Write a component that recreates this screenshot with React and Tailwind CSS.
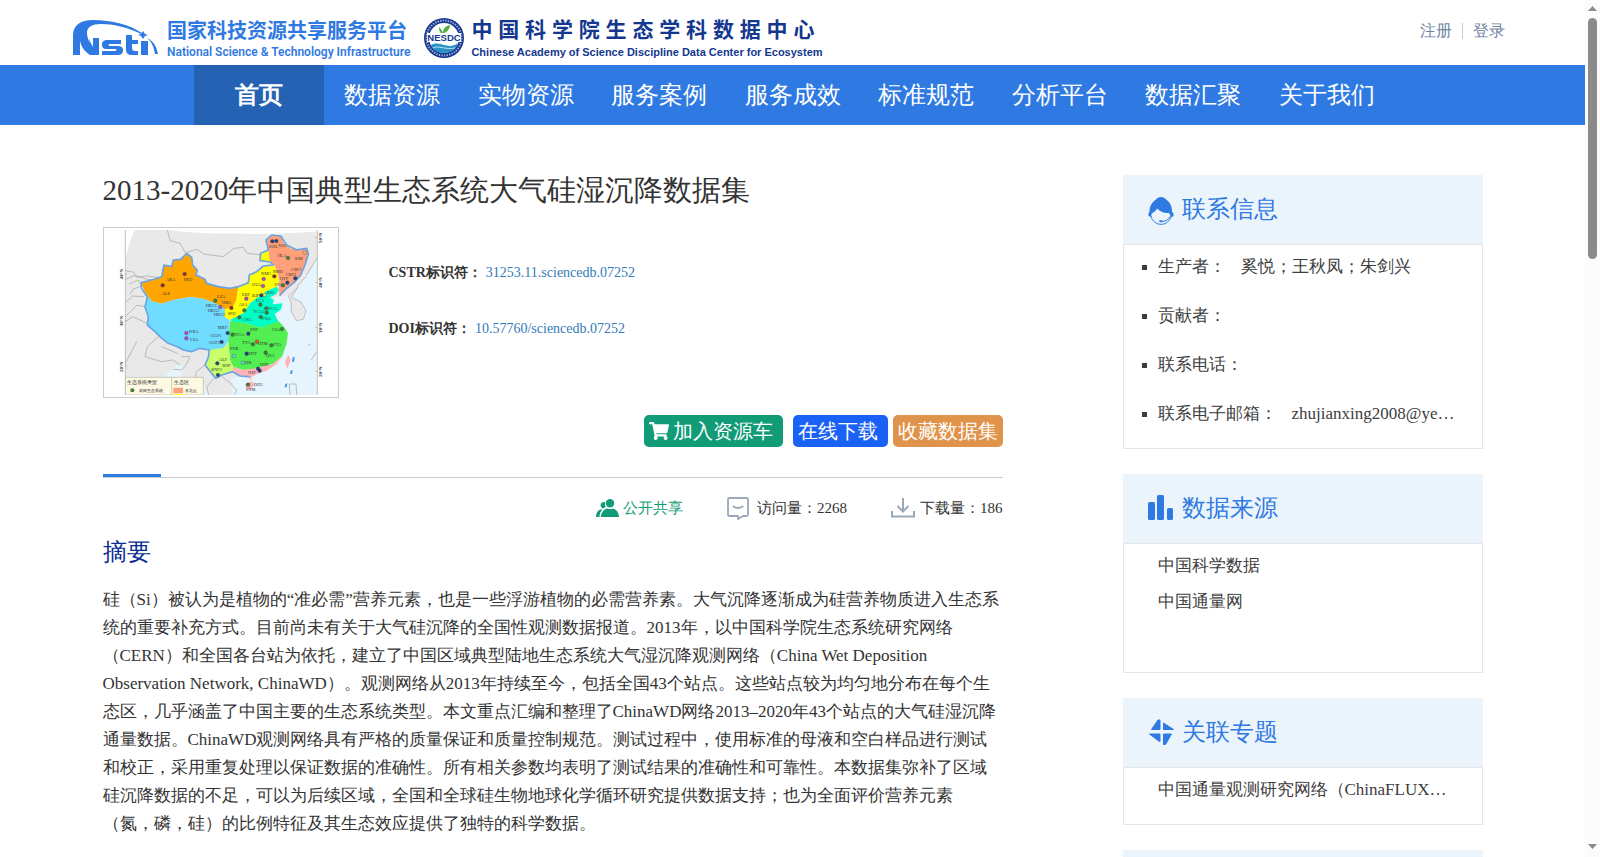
import React from "react";
import { FaShoppingCart } from "react-icons/fa";

const NAV = ["数据资源", "实物资源", "服务案例", "服务成效", "标准规范", "分析平台", "数据汇聚", "关于我们"];

const CONTACTS = [
  ["生产者：", "奚悦；王秋凤；朱剑兴"],
  ["贡献者：", ""],
  ["联系电话：", ""],
  ["联系电子邮箱：", "zhujianxing2008@ye…"],
];

const ABSTRACT =
  "硅（Si）被认为是植物的“准必需”营养元素，也是一些浮游植物的必需营养素。大气沉降逐渐成为硅营养物质进入生态系统的重要补充方式。目前尚未有关于大气硅沉降的全国性观测数据报道。2013年，以中国科学院生态系统研究网络（CERN）和全国各台站为依托，建立了中国区域典型陆地生态系统大气湿沉降观测网络（China Wet Deposition Observation Network, ChinaWD）。观测网络从2013年持续至今，包括全国43个站点。这些站点较为均匀地分布在每个生态区，几乎涵盖了中国主要的生态系统类型。本文重点汇编和整理了ChinaWD网络2013–2020年43个站点的大气硅湿沉降通量数据。ChinaWD观测网络具有严格的质量保证和质量控制规范。测试过程中，使用标准的母液和空白样品进行测试和校正，采用重复处理以保证数据的准确性。所有相关参数均表明了测试结果的准确性和可靠性。本数据集弥补了区域硅沉降数据的不足，可以为后续区域，全国和全球硅生物地球化学循环研究提供数据支持；也为全面评价营养元素（氮，磷，硅）的比例特征及其生态效应提供了独特的科学数据。";

function NstiLogo() {
  return (
    <svg className="mt-0.5 h-9 w-[86px] shrink-0" viewBox="0 0 86 36" fill="#2f7ae2" role="img" aria-label="Nsti">
      <path d="M0 35V14C1 4 9 0 20 0C39 0 57 5 69 13L68 14C54 7 40 4 28 4C19 4 14 7 14 13C14 21 20 28 26 35H17C11 31 8 26 7 21V35Z" />
      <path d="M16 19C17 22 19 25 20 27V18H26V35H21C18 30 16 25 16 19Z" />
      <path d="M35 20H48V24H37C35 24 35 26 37 26H44C48 26 50 27 50 30C50 34 48 35 44 35H29V31H42C44 31 44 29 42 29H34C30 29 29 27 29 25C29 21 31 20 35 20Z" />
      <path d="M53 15H59V20H65V24H59V28C59 30 60 31 62 31H65V35H59C55 35 53 33 53 30Z" />
      <path d="M68 21H75V35H68Z" />
      <path d="M70 11L72 14L75 15L72 16L70 19L68 16L65 15L68 14Z" />
      <path d="M74 18C81 21 84 28 85 34H82C81 28 79 22 74 18Z" />
    </svg>
  );
}

function NesdcSeal() {
  return (
    <svg className="size-10 shrink-0" viewBox="0 0 40 40" role="img" aria-label="NESDC">
      <circle cx="20" cy="20" r="20" fill="#14388f" />
      <circle cx="20" cy="20" r="17.5" fill="none" stroke="#fff" strokeWidth="2" strokeDasharray="1.4 1.2" opacity=".6" />
      <circle cx="20" cy="20" r="15" fill="#fff" />
      <path d="M7 27C12 24 16 26 20 27S29 29 34 25C32 31 27 35 20 35S9 32 7 27Z" fill="#2793c4" />
      <path d="M9 30C15 27 21 32 31 30" fill="none" stroke="#bfe4f2" />
      <path d="M19 15C18 12 16 10 15 9C15 13 16 15 19 16C22 14 26 12 26 7C21 8 19 11 19 15Z" fill="#4fae3c" />
      <path d="M3 15H37V24H3Z" fill="#fff" />
      <text x="20" y="23" fontSize="9.5" fontWeight="700" fontFamily="Liberation Sans, sans-serif" fill="#14388f" textAnchor="middle">NESDC</text>
    </svg>
  );
}

const MAROON = "#8a2d3c";
const GREEN = "#3f7f3a";
const NAVY = "#24417e";
const PURPLE = "#b648d8";
const CYAN = "#68d9dc";

const STATIONS = [
  [284, 342, MAROON], [218, 376, MAROON], [376, 422, GREEN], [391, 441, PURPLE], [424, 444, MAROON],
  [289, 519, PURPLE], [289, 535, PURPLE], [547, 244, NAVY], [559, 243, NAVY], [594, 294, GREEN],
  [644, 278, "#f2b66b"], [553, 349, MAROON], [521, 357, PURPLE], [519, 378, PURPLE], [616, 355, NAVY],
  [592, 368, NAVY], [579, 376, GREEN], [469, 416, PURPLE], [514, 406, NAVY], [524, 405, "#d6e85c"],
  [463, 451, GREEN], [511, 434, GREEN], [529, 445, GREEN], [530, 458, GREEN], [512, 471, GREEN],
  [448, 472, GREEN], [413, 519, NAVY], [428, 524, GREEN], [475, 521, NAVY], [576, 507, GREEN],
  [501, 545, "#e2572e"], [489, 553, GREEN], [544, 556, GREEN], [395, 546, NAVY], [470, 581, NAVY],
  [527, 578, GREEN], [432, 588, CYAN], [459, 608, CYAN], [504, 626, NAVY], [509, 632, NAVY],
  [382, 610, NAVY], [384, 645, NAVY], [474, 674, GREEN],
];

const LABELS = [
  [228, 362, "AKA"], [281, 362, "FKD"], [215, 405, "ALE"], [381, 413, "LZA"], [347, 441, "HBG1"], [353, 455, "HBG2"],
  [371, 468, "HBG3"], [396, 433, "HBG"], [297, 519, "DXA"], [300, 544, "LSA"], [537, 265, "DHL"], [565, 260, "NJO"],
  [563, 290, "HLA"], [614, 301, "SJM"], [603, 332, "CBF1"], [587, 348, "CBF2"], [548, 339, "NMD"], [513, 346, "NMG"],
  [486, 379, "ULG"], [569, 361, "QYF"], [553, 379, "SYA"], [456, 407, "ERF"], [486, 410, "BJF"], [530, 403, "BJU"],
  [446, 437, "ASA"], [497, 427, "LCA"], [490, 459, "YCA2"], [534, 450, "YCA"], [517, 479, "FQA"], [457, 484, "CWA"],
  [413, 465, "SPD"], [383, 506, "MXF"], [362, 530, "GGF1"], [357, 551, "GGF2"], [434, 528, "YGA"], [480, 513, "SNF"],
  [545, 512, "CSA"], [457, 553, "TYA"], [504, 554, "HTM"], [550, 559, "PTA"], [421, 570, "PDK"], [476, 586, "HTF"],
  [527, 592, "QYA"], [461, 612, "HJK"], [387, 602, "ALF"], [397, 622, "BNF"], [364, 634, "BNF2"], [510, 617, "DHF"],
  [474, 642, "HSF"], [491, 679, "DZU"], [468, 692, "SYM"],
];

const LATITUDES = [
  [99, 358, "40°N"], [99, 499, "30°N"], [99, 636, "20°N"],
  [697, 249, "50°N"], [697, 383, "40°N"], [697, 519, "30°N"], [697, 651, "20°N"],
];

function EcoMap() {
  return (
    <svg className="block h-auto w-full" viewBox="42 204 702 507" role="img" aria-label="生态区站点分布图" fontFamily="Liberation Serif, serif">
      <defs>
        <clipPath id="map-frame"><path d="M106 210H682V705H106Z" /></clipPath>
      </defs>
      <g clipPath="url(#map-frame)" strokeLinejoin="round" strokeLinecap="round">
        <path d="M106 210H682V705H106Z" fill="#e9e9e9" />
        <path d="M106 210H134Q116 250 106 300ZM232 210H682V214Q540 226 430 220Q320 222 232 210Z" fill="#fff" />
        <path d="M682 290L650 345L625 378L608 398L604 412L632 425L648 452L640 478L618 484L600 455L602 428L596 408L572 408L540 420L560 500L590 540L575 595L540 625L480 652L440 650L430 660L452 705H682Z" fill="#e6f5fd" />
        <path d="M106 632H150L170 650H225L240 625L265 608L280 620L275 650L345 655L355 705H106ZM400 705L405 672L430 655L455 705Z" fill="#e6f5fd" />
        <path d="M106 560L140 572L175 560L215 560L262 575L300 580L350 580L345 610L365 650L400 655L430 668L425 705H360L340 670L300 650L285 622L272 610L242 632L222 650H106Z" fill="#e9e9e9" />
        <path d="M596 408L625 380L604 412L632 425L648 452L640 478L620 482L604 455L604 430Z" fill="#e9e9e9" stroke="#a9a9a9" strokeWidth="2" />
        <g fill="none" stroke="#b0b0b0" strokeWidth="2.5">
          <path d="M232 210L240 242L270 250L286 278L322 268L340 282L400 290L432 265L460 262L472 280L510 284" />
          <path d="M106 332L130 336L140 352L170 348L205 352M106 358L135 346L172 358L190 360M118 372L145 360L155 378L128 388L120 402M106 428L128 408L160 410M106 470L140 436L168 440M106 485L128 470L172 490" />
          <path d="M205 530L172 560L165 590L215 605L248 600L270 615M215 560L262 580M275 590L300 590L290 612L275 630L250 628M350 610L320 635L312 660L340 670M372 655L350 680L356 705M398 652L420 668L440 690L432 705M140 545L106 610" />
          <path d="M682 292L650 345M648 350L622 378M680 575L670 590L664 600M656 555L660 553M600 705L598 672L618 672L620 705" />
        </g>
        <path d="M153 368L185 360L215 350L222 315L245 320L250 300L272 298L290 280L305 292L308 315L322 330L318 345L345 358L350 370L385 380L420 385L445 380L439 420L430 440L405 449L380 432L340 416L300 411L250 420L215 431L185 424L166 398Z" fill="#ffa500" />
        <path d="M153 372L166 398L185 424L215 431L250 420L300 411L340 416L380 432L405 447L404 470L419 480L417 540L402 563L375 570L358 570L330 565L305 575L280 570L262 560L235 550L215 535L195 515L172 495L175 470L165 440L172 412Z" fill="#70dcff" />
        <path d="M445 380L475 368L478 345L500 335L520 318L550 315L560 330L568 365L560 380L530 393L500 415L482 428L460 460L420 480L404 470L405 448L430 440L439 420ZM510 282L535 272L542 306L510 303Z" fill="#ffff00" />
        <path d="M540 306L535 270L528 240L545 225L572 228L582 252L605 268L650 265L655 282L645 315L632 345L612 368L590 385L570 410L566 388L568 360L560 330L552 314Z" fill="#ffa07a" />
        <path d="M560 380L566 390L560 402L540 412L552 420L548 433L578 430L572 450L554 462L566 485L540 495L510 503L470 490L430 487L420 480L460 460L482 428L500 415L530 393Z" fill="#00ffc8" />
        <path d="M420 484L470 490L510 503L566 484L582 500L594 520L590 550L576 590L548 612L500 625L460 630L430 620L420 600L415 545Z" fill="#52ee52" />
        <path d="M358 570L402 563L415 545L420 600L430 620L428 635L395 645L378 655L365 640L345 615L355 592Z" fill="#c9ff6b" />
        <path d="M428 620L460 630L500 625L548 612L576 588L560 612L530 632L500 642L484 652L484 664L477 652L450 648L430 638ZM466 672L486 664L492 674L482 690L468 686ZM585 605L595 585L602 600L592 628Z" fill="#ffb3b8" />
        <path d="M570 405L590 385L612 368L632 345L645 315L655 282L650 265L620 270L590 255L572 228L545 225L528 240L535 270L512 280L510 302L540 306L550 315L520 318L500 335L478 345L475 368L445 380L420 385L385 380L350 370L345 358L318 345L322 330L308 315L305 292L290 280L272 298L250 300L245 320L222 315L215 350L185 360L153 368L155 385L172 412L165 440L175 470L172 495L195 515L215 535L235 550L262 560L280 570L305 575L330 565L358 570L355 592L345 615L365 640L378 655L395 645L428 635L450 648L477 650" fill="none" stroke="#6ba3e3" strokeWidth="5" />
        <path d="M608 592L614 591L612 605L606 606ZM602 632L608 630L606 642L600 642ZM586 672L592 670L590 682L584 682Z" fill="#4a90e2" />
        <path d="M106 652H340V705H106Z" fill="#fdf9e3" stroke="#b5b5a5" strokeWidth="2" />
        <path d="M245 652V705" stroke="#b5b5a5" strokeWidth="2" />
        <path d="M250 683H279V700H250Z" fill="#ffa07a" />
        <path d="M250 702H279V706H250Z" fill="#ffff00" />
        <circle cx="127" cy="691" r="6" fill={GREEN} />
      </g>
      <g fontSize="15" fill="#222">
        <text x="112" y="672">生态系统类型</text>
        <text x="252" y="672">生态区</text>
        <g fontSize="13">
          <text x="147" y="696">农田生态系统</text>
          <text x="286" y="696">东北区</text>
        </g>
      </g>
      <g fontSize="13" fill="#333">
        {LABELS.map(([x, y, name]) => (
          <text key={name} x={x} y={y}>{name}</text>
        ))}
      </g>
      {STATIONS.map(([x, y, color]) => (
        <circle key={`${x}-${y}`} cx={x} cy={y} r="5.5" fill={color} stroke="#333" strokeWidth="1" />
      ))}
      <g fontSize="15" fontWeight="700" fill="#333">
        {LATITUDES.map(([x, y, name]) => (
          <text key={`${x}-${y}`} transform={`translate(${x} ${y}) rotate(-90)`}>{name}</text>
        ))}
      </g>
      <path d="M106 210V705M682 210V705M106 342H112M106 482H112M106 617H112M676 232H682M676 367H682M676 502H682M676 634H682" stroke="#a5a5a5" strokeWidth="2" />
    </svg>
  );
}

function AgentIcon() {
  return (
    <svg className="mt-1 h-7 w-[26px]" viewBox="0 0 26 28" fill="#2f7ae2" aria-hidden="true">
      <path d="M13 0C15.500 0 17 1 18 2.500C22 5 24 9 24 15L25.500 16V19L23 20.500C22.500 19 22 17.500 21 16C16 16.500 12 14.500 9 11.500C8 14.500 5 15 3.500 17L3 20L0.500 19V16L1.500 15C1.500 9 4 5 8 2.500C9 1 10.500 0 13 0Z" />
      <path d="M3 19C4 24 8 27.300 13 27.300C18 27.300 22 24 23 19" fill="none" stroke="#2f7ae2" strokeWidth="1" />
      <path d="M22 20C20 23 17 24.500 13.500 24.500" fill="none" stroke="#2f7ae2" strokeWidth="1" />
      <ellipse cx="13" cy="24.300" rx="2" ry="1" />
    </svg>
  );
}

function SourceIcon() {
  return (
    <svg className="size-[26px]" viewBox="0 0 26 26" fill="#2f7ae2" aria-hidden="true">
      <rect x="0" y="7" width="7" height="18" rx="1.5" />
      <rect x="9" y="0" width="7" height="25" rx="1.5" />
      <rect x="19" y="13" width="6" height="12" rx="1.5" />
    </svg>
  );
}

function TopicIcon() {
  return (
    <svg className="size-[26px]" viewBox="0 0 26 26" fill="#2f7ae2" stroke="#2f7ae2" strokeLinejoin="round" aria-hidden="true">
      <path d="M12 1V10.500H3.500L10 1Z" />
      <path d="M15.500 4L25.500 10.500H15.500Z" />
      <path d="M1.500 15H12V22.500L10 21.500Z" />
      <path d="M15.500 15H23.500L17.500 25.500H15.500Z" />
    </svg>
  );
}

function PeopleIcon() {
  return (
    <svg className="h-[18px] w-[23px]" viewBox="0 0 23 18" fill="#119c77" aria-hidden="true">
      <path d="M5 4.500A3.300 3.300 0 0 1 9 3.200C8.800 5 9 6.600 9.800 8L7 9.600A3.600 3.600 0 0 1 5 4.500Z" />
      <path d="M0 18C0 14 1.500 11.500 4.500 10.300L6.200 10.800C4.400 12.500 3.600 15 3.500 18Z" />
      <circle cx="14" cy="4.300" r="4.200" />
      <path d="M4.800 18C5.300 12.500 9 10 11 9.400C13 10.300 15 10.300 17 9.400C20 10.200 22.800 13 23 18Z" />
    </svg>
  );
}

function VisitIcon() {
  return (
    <svg className="h-[23px] w-[22px]" viewBox="0 0 22 23" fill="none" stroke="#9ba8b7" strokeWidth="1.8" strokeLinejoin="round" aria-hidden="true">
      <path d="M2.500 1H19.500Q21 1 21 2.500V17.500Q21 19 19.500 19H16L11 22V19H2.500Q1 19 1 17.500V2.500Q1 1 2.500 1Z" />
      <path d="M6.500 9.500Q11 12.500 15.500 9.500" strokeWidth="2" strokeLinecap="round" />
    </svg>
  );
}

function DownloadIcon() {
  return (
    <svg className="h-5 w-6" viewBox="0 0 24 20" fill="none" stroke="#9ba8b7" strokeWidth="2" aria-hidden="true">
      <path d="M12 0V13M6.500 8L12 13.500L17.500 8" />
      <path d="M1 13V18.500H23V13" />
    </svg>
  );
}

function Card({ icon, title, children }) {
  return (
    <section>
      <h2 className="flex h-[69px] items-center gap-2 bg-[#ecf4fb] pb-0.5 pl-[25px] text-2xl text-[#2f7ae2]">
        {icon}
        {title}
      </h2>
      {children}
    </section>
  );
}

function ScrollRail() {
  return (
    <div className="flex w-[15px] shrink-0 flex-col items-center justify-between bg-[#fcfcfc] pt-1.5 pb-2" aria-hidden="true">
      <div className="flex flex-col items-center gap-[7px]">
        <svg className="h-[5px] w-[9px]" viewBox="0 0 9 5" fill="#8b8b8b"><path d="M4.500 0L9 5H0Z" /></svg>
        <div className="h-[241px] w-[9px] rounded-full bg-[#8b8b8b]" />
      </div>
      <svg className="h-[5px] w-[9px]" viewBox="0 0 9 5" fill="#8b8b8b"><path d="M0 0H9L4.500 5Z" /></svg>
    </div>
  );
}

export default function App() {
  return (
    <div className="flex h-screen overflow-hidden bg-white text-[#333] [font-family:'Liberation_Serif',serif]">
      <div className="min-w-0 flex-1 overflow-hidden">
        <header className="flex h-[65px] items-start justify-between pr-20 pl-[73px]">
          <div className="flex items-start gap-3.5 pt-[18px]">
            <a href="#" className="flex items-start gap-2 text-[#2f7ae2]">
              <NstiLogo />
              <span className="[font-family:'Noto_Sans_CJK_SC',sans-serif]">
                <span className="block text-xl leading-6 font-bold">国家科技资源共享服务平台</span>
                <span className="block text-xs leading-5 font-semibold [font-family:Roboto,sans-serif]">National Science &amp; Technology Infrastructure</span>
              </span>
            </a>
            <a href="#" className="flex items-start gap-[7px] text-[#14388f]">
              <NesdcSeal />
              <span className="[font-family:'Liberation_Sans','Noto_Sans_CJK_SC',sans-serif]">
                <span className="block text-[21px] leading-6 font-bold">中 国 科 学 院 生 态 学 科 数 据 中 心</span>
                <span className="block text-[11px] leading-5 font-bold">Chinese Academy of Science Discipline Data Center for Ecosystem</span>
              </span>
            </a>
          </div>
          <div className="flex items-center pt-[19px] leading-6 text-[#6f84a3]">
            <a href="#">注册</a>
            <span className="mx-2.5 h-4 w-px bg-[#c5cedb]" />
            <a href="#">登录</a>
          </div>
        </header>

        <nav className="bg-[#2f7ae2] pl-0.5 text-2xl text-white">
          <div className="mx-auto flex h-[60px] max-w-[1200px]">
            <a href="#" className="flex w-[130px] items-center justify-center bg-[#2562b3] font-bold">首页</a>
            <div className="flex flex-1 pl-0.5">
              {NAV.map((name) => (
                <a key={name} href="#" className="flex flex-1 items-center justify-center whitespace-nowrap">{name}</a>
              ))}
            </div>
          </div>
        </nav>

        <main className="mx-auto flex max-w-[1380px] items-start justify-between gap-10 pt-[50px]">
          <article className="w-[900px]">
            <h1 className="text-[29px] leading-[30px]">2013-2020年中国典型生态系统大气硅湿沉降数据集</h1>
            <div className="mt-[22px] flex gap-[50px]">
              <div className="w-[236px] border border-[#ccc]">
                <EcoMap />
              </div>
              <dl className="flex flex-col gap-9 pt-9 text-sm leading-5">
                <div className="flex gap-1">
                  <dt className="font-bold">CSTR标识符：</dt>
                  <dd><a href="#" className="text-[#337ab7]">31253.11.sciencedb.07252</a></dd>
                </div>
                <div className="flex gap-1">
                  <dt className="font-bold">DOI标识符：</dt>
                  <dd><a href="#" className="text-[#337ab7]">10.57760/sciencedb.07252</a></dd>
                </div>
              </dl>
            </div>

            <div className="mt-[17px] flex h-8 justify-end text-xl text-white">
              <button type="button" className="flex items-center gap-1 rounded-[5px] bg-[#119c77] pr-2.5 pl-[5px]">
                <FaShoppingCart className="size-5" aria-hidden="true" />
                加入资源车
              </button>
              <button type="button" className="ml-2.5 rounded-[5px] bg-[#1a62f5] pr-2.5 pl-[5px]">在线下载</button>
              <button type="button" className="ml-[5px] rounded-[5px] bg-[#e0934a] px-[5px]">收藏数据集</button>
            </div>

            <div className="mt-[27px] border-b border-[#ccc]">
              <div className="h-[3px] w-[58px] bg-[#2f7ae2]" />
            </div>

            <div className="mt-[18px] flex h-6 items-center justify-end text-[15px]">
              <span className="flex items-center gap-1 text-[#119c77]"><PeopleIcon />公开共享</span>
              <span className="ml-11 flex items-center gap-2"><VisitIcon />访问量：2268</span>
              <span className="ml-11 flex items-center gap-[5px]"><DownloadIcon />下载量：186</span>
            </div>

            <h2 className="mt-4 text-2xl text-[#0b2d93]">摘要</h2>
            <p className="mt-[18px] text-[17px] leading-7">{ABSTRACT}</p>
          </article>

          <aside className="flex w-[360px] shrink-0 flex-col gap-[25px] text-[17px] text-[#3d3d3d]">
            <Card icon={<AgentIcon />} title="联系信息">
              <ul className="flex flex-col gap-[25px] border border-[#e5e5e5] px-[18px] pt-2.5 pb-[22px] leading-6">
                {CONTACTS.map(([label, value]) => (
                  <li key={label} className="flex items-center whitespace-nowrap">
                    <span className="mr-[11px] size-[5px] bg-[#3d3d3d]" />
                    {label}
                    <span className="ml-[15px]">{value}</span>
                  </li>
                ))}
              </ul>
            </Card>
            <Card icon={<SourceIcon />} title="数据来源">
              <ul className="flex h-[130px] flex-col gap-3 border border-[#e5e5e5] px-[34px] pt-2.5 leading-6">
                <li><a href="#">中国科学数据</a></li>
                <li><a href="#">中国通量网</a></li>
              </ul>
            </Card>
            <Card icon={<TopicIcon />} title="关联专题">
              <div className="h-[58px] border border-[#e5e5e5] px-[34px] pt-2.5 leading-6">
                <a href="#" className="whitespace-nowrap">中国通量观测研究网络（ChinaFLUX…</a>
              </div>
            </Card>
            <div className="h-[69px] bg-[#ecf4fb]" />
          </aside>
        </main>
      </div>
      <ScrollRail />
    </div>
  );
}
